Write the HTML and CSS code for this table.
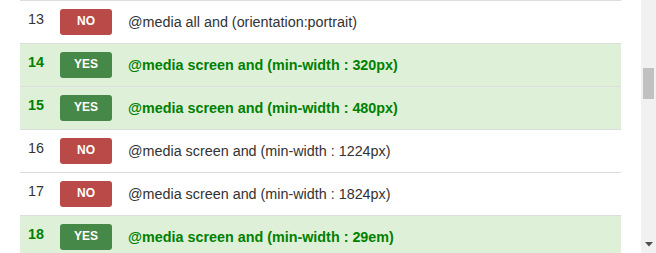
FILE: index.html
```html
<!DOCTYPE html>
<html>
<head>
<meta charset="utf-8">
<link rel="stylesheet" href="styles.css">
</head>
<body>
<div class="page">
  <div class="content">
    <table class="results">
      <colgroup>
        <col class="col-num">
        <col class="col-badge">
        <col class="col-query">
      </colgroup>
      <tr class="row">
        <td class="num">13</td>
        <td class="badge-cell"><span class="badge no">NO</span></td>
        <td class="query">@media all and (orientation:portrait)</td>
      </tr>
      <tr class="row match">
        <td class="num">14</td>
        <td class="badge-cell"><span class="badge yes">YES</span></td>
        <td class="query">@media screen and (min-width : 320px)</td>
      </tr>
      <tr class="row match">
        <td class="num">15</td>
        <td class="badge-cell"><span class="badge yes">YES</span></td>
        <td class="query">@media screen and (min-width : 480px)</td>
      </tr>
      <tr class="row">
        <td class="num">16</td>
        <td class="badge-cell"><span class="badge no">NO</span></td>
        <td class="query">@media screen and (min-width : 1224px)</td>
      </tr>
      <tr class="row">
        <td class="num">17</td>
        <td class="badge-cell"><span class="badge no">NO</span></td>
        <td class="query">@media screen and (min-width : 1824px)</td>
      </tr>
      <tr class="row match">
        <td class="num">18</td>
        <td class="badge-cell"><span class="badge yes">YES</span></td>
        <td class="query">@media screen and (min-width : 29em)</td>
      </tr>
    </table>
  </div>
  <div class="scrollbar">
    <div class="thumb"></div>
    <svg class="arrow" width="8" height="5" viewBox="0 0 8 5"><path d="M0 0H8L4 4.5Z" fill="#505050"/></svg>
  </div>
</div>
</body>
</html>
```
FILE: styles.css
```css
html, body {
  margin: 0;
  padding: 0;
  background: #fff;
}
.page {
  display: flex;
  width: 656px;
  height: 253px;
  overflow: hidden;
}
.content {
  width: 641px;
  padding: 0 20px;
  box-sizing: border-box;
}
.results {
  width: 601px;
  table-layout: fixed;
  border-collapse: collapse;
  font-family: "Liberation Sans", Arial, sans-serif;
  font-size: 14.35px;
  line-height: 20px;
  color: #333;
}
.col-num {
  width: 32px;
}
.col-badge {
  width: 68px;
}
.row td {
  border-top: 1px solid #dddddd;
  padding: 8px;
  vertical-align: middle;
  height: 26px;
  box-sizing: content-box;
}
.row td.num {
  padding-bottom: 11px;
  padding-top: 5px;
}
.row.match td {
  background: #dff0d8;
  color: #008000;
  font-weight: bold;
}
.badge {
  display: block;
  width: 52px;
  height: 26px;
  line-height: 25px;
  border-radius: 3px;
  text-align: center;
  color: #fff;
  font-weight: bold;
  font-size: 12px;
}
.badge.no {
  background: #b94a48;
}
.badge.yes {
  background: #468847;
}
.scrollbar {
  width: 15px;
  height: 253px;
  background: #f1f1f1;
  display: flex;
  flex-direction: column;
  align-items: center;
}
.thumb {
  width: 11px;
  height: 31px;
  margin-top: 68px;
  background: #c1c1c1;
}
.arrow {
  margin-top: auto;
  margin-bottom: 6px;
}
```
